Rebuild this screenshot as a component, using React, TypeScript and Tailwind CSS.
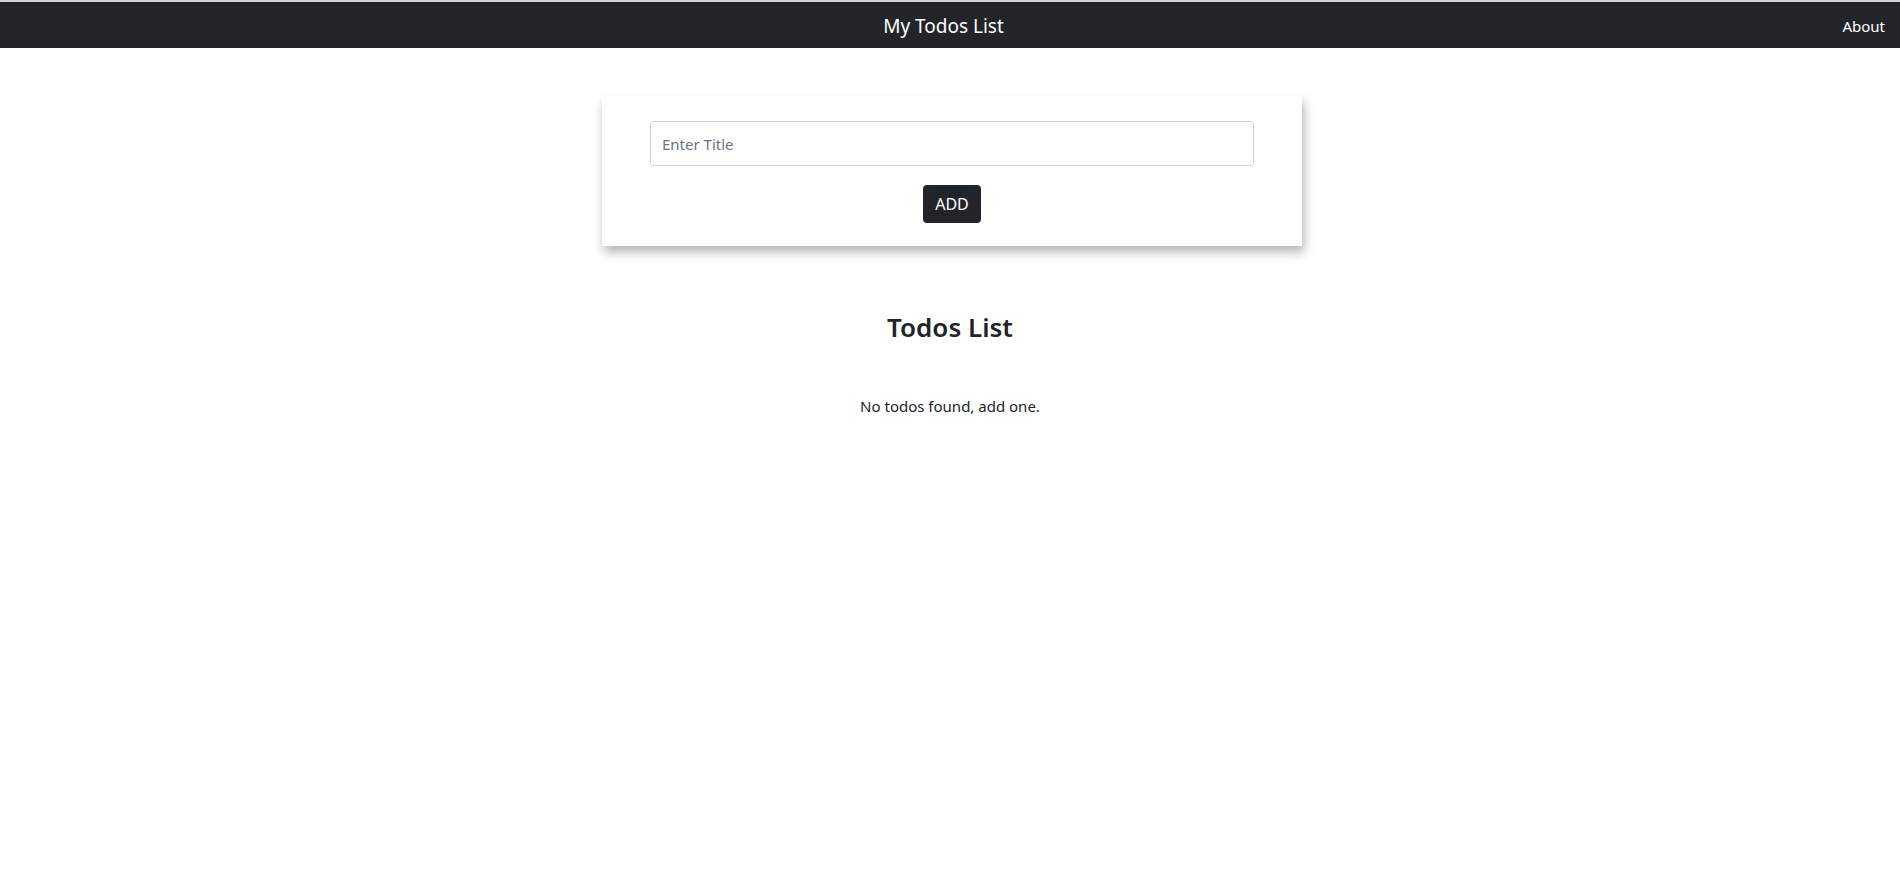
import {useState} from 'react'

function Navbar() {
  return (
    <nav className="border-t-2 border-[#d4d4d4] bg-[#212529] h-[48px] grid grid-cols-[1fr_auto_1fr] items-center px-[15px] pt-[2px]">
      <div></div>
      <span className="text-white text-[19px] mr-[13px]">My Todos List</span>
      <div className="flex justify-end">
        <a href="#" className="text-white text-[15px]">About</a>
      </div>
    </nav>
  )
}

function AddTodo() {
  const [title, setTitle] = useState('')
  return (
    <form
      className="w-[700px] h-[150px] ml-[calc(50%-348px)] mt-[48px] bg-white px-[48px] pt-[25px] flex flex-col items-center shadow-[2px_6px_10px_rgba(0,0,0,0.3)]"
      onSubmit={e => e.preventDefault()}
    >
      <input
        type="text"
        value={title}
        onChange={e => setTitle(e.target.value)}
        placeholder="Enter Title"
        className="w-full h-[45px] border border-[#ced4da] rounded-[4px] px-[11px] text-[15px] text-[#212529] placeholder:text-[#6c757d] outline-none"
      />
      <button type="submit" className="mt-[19px] h-[38px] px-[12px] rounded-[4px] bg-[#212529] text-white text-[16px]">
        ADD
      </button>
    </form>
  )
}

export default function App() {
  return (
    <div className="min-h-screen bg-white text-[#212529] font-['Noto_Sans',sans-serif]">
      <Navbar />
      <AddTodo />
      <div className="flex flex-col items-center">
        <h3 className="mt-[66px] text-[26px] font-semibold leading-[1.2]">Todos List</h3>
        <p className="mt-[51px] text-[15px] leading-[24px]">No todos found, add one.</p>
      </div>
    </div>
  )
}
